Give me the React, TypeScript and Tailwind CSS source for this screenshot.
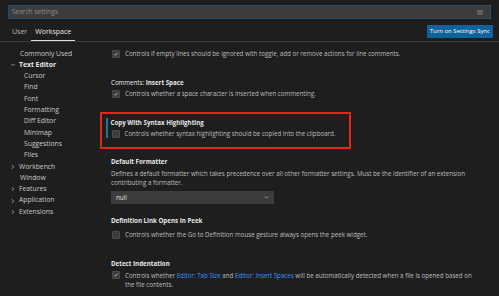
import React from 'react';

const font = "font-['Open_Sans','Noto_Sans',sans-serif]";

function Check({ checked }: { checked: boolean }) {
  return (
    <div className="w-[8px] h-[8px] shrink-0 bg-[#3c3c3c] border border-[#4a4a4a] rounded-[1px] flex items-center justify-center">
      {checked && (
        <svg viewBox="0 0 16 16" className="w-[8px] h-[8px]">
          <path d="M3.5 8.5 L6.5 11.5 L12.5 4" fill="none" stroke="#e8e8e8" strokeWidth="1.8" />
        </svg>
      )}
    </div>
  );
}

function Chevron({ open }: { open: boolean }) {
  return (
    <svg viewBox="0 0 8 8" className="w-[6px] h-[6px] shrink-0">
      {open ? (
        <path d="M1.5 2.5 L4 5 L6.5 2.5" fill="none" stroke="#c5c5c5" strokeWidth="0.9" />
      ) : (
        <path d="M2.5 1.5 L5 4 L2.5 6.5" fill="none" stroke="#c5c5c5" strokeWidth="0.9" />
      )}
    </svg>
  );
}

const tree = [
  { label: 'Commonly Used', level: 0 },
  { label: 'Text Editor', level: 0, chevron: 'open', bold: true },
  { label: 'Cursor', level: 1 },
  { label: 'Find', level: 1 },
  { label: 'Font', level: 1 },
  { label: 'Formatting', level: 1 },
  { label: 'Diff Editor', level: 1 },
  { label: 'Minimap', level: 1 },
  { label: 'Suggestions', level: 1 },
  { label: 'Files', level: 1 },
  { label: 'Workbench', level: 0, chevron: 'closed' },
  { label: 'Window', level: 0 },
  { label: 'Features', level: 0, chevron: 'closed' },
  { label: 'Application', level: 0, chevron: 'closed' },
  { label: 'Extensions', level: 0, chevron: 'closed' },
];

export default function App() {
  return (
    <div className={`w-[499px] h-[296px] bg-[#1e1e1e] overflow-hidden text-[#cccccc] ${font}`}>
      {/* Search */}
      <div className="px-[8px] pt-[5px]">
        <div className="h-[14px] bg-[#3c3c3c] border border-[#1f4d6b] flex items-center pl-[3px] pr-[7px]">
          <span className="text-[6.5px] text-[#8c8c8c]">Search settings</span>
          <div className="ml-auto w-[6px] h-[5px] bg-[#5f5f5f] rounded-[1px]" />
        </div>
      </div>

      {/* Tabs */}
      <div className="h-[23px] flex items-end border-b border-[#3b3b3b] pl-[12px] pr-[6px]">
        <div className="flex items-end text-[7px]">
          <span className="pb-[4px] mr-[4px] text-[#b8b8b8]">User</span>
          <span className="px-[4px] pb-[3px] border-b border-[#e0e0e0] text-[#e8e8e8]">Workspace</span>
        </div>
        <div className="ml-auto mb-[3px] h-[13px] px-[3px] bg-[#0e639c] text-white text-[6px] flex items-center">
          Turn on Settings Sync
        </div>
      </div>

      <div className="flex">
        {/* Tree */}
        <div className="w-[100px] shrink-0 pt-[6px] text-[6.8px] text-[#c8c8c8]">
          {tree.map((t) => (
            <div key={t.label} className="h-[11.3px] flex items-center">
              {t.chevron ? (
                <div className="w-[19px] flex justify-end pr-[3px]">
                  <Chevron open={t.chevron === 'open'} />
                </div>
              ) : (
                <div className={t.level === 1 ? 'w-[24px]' : 'w-[20px]'} />
              )}
              <span className={t.bold ? 'font-bold text-[#e6e6e6]' : ''}>{t.label}</span>
            </div>
          ))}
        </div>

        {/* Settings */}
        <div className="flex-1 flex flex-col text-[6.2px] text-[#bdbdbd]">
          <div className="mt-[8px] pl-[12px] h-[8px] flex items-center gap-[5px]">
            <Check checked />
            <span>Controls if empty lines should be ignored with toggle, add or remove actions for line comments.</span>
          </div>

          <div className="mt-[20px] pl-[11px] h-[9px] leading-[9px] text-[#e6e6e6]">
            Comments: <span className="font-bold">Insert Space</span>
          </div>
          <div className="mt-[3px] pl-[12px] h-[8px] flex items-center gap-[5px]">
            <Check checked />
            <span>Controls whether a space character is inserted when commenting.</span>
          </div>

          <div className="mt-[14px] w-[251px] border-2 border-[#e3261c] flex pt-[4px] pb-[9px]">
            <div className="ml-[4px] w-[1.5px] bg-[#1f7891] self-stretch" />
            <div className="ml-[3px] flex flex-col">
              <div className="h-[9px] leading-[9px] font-bold text-[#e6e6e6]">Copy With Syntax Highlighting</div>
              <div className="mt-[3px] pl-[1px] h-[8px] flex items-center gap-[5px]">
                <Check checked={false} />
                <span>Controls whether syntax highlighting should be copied into the clipboard.</span>
              </div>
            </div>
          </div>

          <div className="mt-[8px] pl-[11px] h-[9px] leading-[9px] font-bold text-[#e6e6e6]">Default Formatter</div>
          <div className="mt-[3px] pl-[11px] leading-[9px]">
            Defines a default formatter which takes precedence over all other formatter settings. Must be the identifier of an extension
            <br />
            contributing a formatter.
          </div>
          <div className="mt-[4px] ml-[11px] w-[163px] h-[13px] bg-[#3c3c3c] flex items-center pl-[5px] pr-[5px] text-[#e0e0e0]">
            <span>null</span>
            <svg viewBox="0 0 8 8" className="ml-auto w-[5px] h-[5px]">
              <path d="M1.5 2.5 L4 5 L6.5 2.5" fill="none" stroke="#c5c5c5" strokeWidth="1" />
            </svg>
          </div>

          <div className="mt-[12px] pl-[11px] h-[9px] leading-[9px] font-bold text-[#e6e6e6]">Definition Link Opens In Peek</div>
          <div className="mt-[6px] pl-[12px] h-[8px] flex items-center gap-[5px]">
            <Check checked={false} />
            <span>Controls whether the Go to Definition mouse gesture always opens the peek widget.</span>
          </div>

          <div className="mt-[20px] pl-[11px] h-[9px] leading-[9px] font-bold text-[#e6e6e6]">Detect Indentation</div>
          <div className="mt-[3px] pl-[12px] flex items-start gap-[5px]">
            <Check checked />
            <span className="leading-[9px] -mt-[0.5px]">
              Controls whether <span className="text-[#3794ff]">Editor: Tab Size</span> and{' '}
              <span className="text-[#3794ff]">Editor: Insert Spaces</span> will be automatically detected when a file is opened based on
              <br />
              the file contents.
            </span>
          </div>
        </div>
      </div>
    </div>
  );
}
